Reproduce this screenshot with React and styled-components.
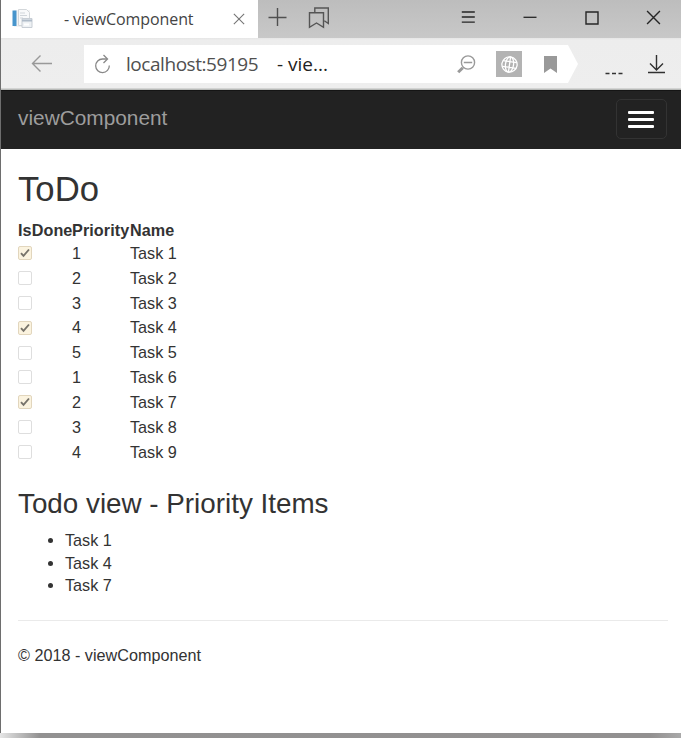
import React from "react";
import styled, { createGlobalStyle } from "styled-components";

const GlobalStyle = createGlobalStyle`
  *, *::before, *::after { box-sizing: border-box; }
  body { margin: 0; background: #fff; }
  svg { display: block; flex: none; }
`;

const Desktop = styled.div`
  width: 681px;
  height: 738px;
  overflow: hidden;
  display: flex;
  flex-direction: column;
`;

const Window = styled.div`
  height: 733px;
  border-left: 1px solid #6e6e6e;
  background: #fff;
  display: flex;
  flex-direction: column;
`;

const WindowShadow = styled.div`
  height: 5px;
  background: linear-gradient(90deg, #e6e6e6 0, #c8c8c8 14px, #929191 40px, #929090 650px, #a9a9a9 681px);
`;

const TabStrip = styled.div`
  height: 38px;
  display: flex;
  background: linear-gradient(#bdbdbd, #c8c8c8);
`;

const Tab = styled.div`
  width: 257px;
  height: 37px;
  padding: 0 13px 0 10px;
  display: flex;
  align-items: center;
  background: #fff;
  box-shadow: 0 1px #fff;
`;

const TabTitle = styled.span`
  flex: 1;
  padding: 1px 0 0 31px;
  font: 16px/22px "Open Sans", sans-serif;
  letter-spacing: -0.1px;
  color: #444;
  white-space: pre;
`;

const StripActions = styled.div`
  flex: 1;
  padding: 7px 20px 0 9px;
  display: flex;
  align-items: flex-start;
  gap: 20px;
`;

const WindowButtons = styled.div`
  margin: 3px 0 0 auto;
  display: flex;
  gap: 47px;
`;

const Toolbar = styled.div`
  height: 52px;
  padding-left: 30px;
  display: flex;
  background: linear-gradient(#e6e6e6 0, #ededed 2px, #eeeeee 50px, #b8bab8 51px, #b8bab8 52px);
`;

const BackButton = styled.div`
  width: 53px;
  padding-top: 16px;
`;

const AddressBar = styled.div`
  width: 494px;
  height: 38px;
  margin-top: 7px;
  padding: 0 20px 0 10px;
  display: flex;
  align-items: center;
  background: #fff;
  clip-path: polygon(0 0, 484px 0, 494px 50%, 484px 100%, 0 100%);
`;

const Address = styled.span`
  margin-left: 15px;
  width: 151px;
  font: 19px/28px "Open Sans", sans-serif;
  letter-spacing: -0.45px;
  color: #505050;
  white-space: pre;
`;

const PageTitle = styled(Address)`
  margin-left: 0;
  width: 60px;
  letter-spacing: 0;
  color: #222;
`;

const AddressIcons = styled.div`
  margin-left: auto;
  display: flex;
  align-items: center;
`;

const GlobeBadge = styled.div`
  width: 26px;
  height: 26px;
  margin: 0 21px 0 20px;
  display: grid;
  place-items: center;
  background: #b3b3b3;
`;

const ToolbarEnd = styled.div`
  padding: 15px 0 0 27px;
  display: flex;
  gap: 24px;
`;

const Navbar = styled.nav`
  height: 59px;
  padding: 0 14px 2px 17px;
  display: flex;
  align-items: center;
  justify-content: space-between;
  background: #222;
  border-top: 1px solid #151515;
`;

const Brand = styled.span`
  padding-bottom: 3px;
  font: 20.83px/24px "Liberation Sans", Arial, sans-serif;
  color: #9d9d9d;
`;

const MenuToggle = styled.div`
  width: 51px;
  height: 40px;
  padding-right: 1px;
  border: 1px solid #333;
  border-radius: 5px;
  display: flex;
  flex-direction: column;
  align-items: center;
  justify-content: center;
  gap: 4px;
`;

const ToggleBar = styled.span`
  width: 26px;
  height: 3px;
  border-radius: 1px;
  background: #fff;
`;

const Page = styled.main`
  flex: 1;
  padding: 0 13px 0 17px;
  font: 16.2px/22.5px "Liberation Sans", Arial, sans-serif;
  color: #333;
`;

const Heading = styled.h2`
  margin: 21px 0 0;
  font-size: 34.7px;
  line-height: 38px;
  font-weight: 400;
`;

const Subheading = styled.h3`
  margin: 24px 0 0;
  font-size: 27.8px;
  line-height: 32px;
  font-weight: 400;
`;

const TaskTable = styled.div`
  padding-top: 11px;
`;

const TaskRow = styled.div`
  height: ${(p) => (p.$head ? "21.8px" : "24.83px")};
  letter-spacing: ${(p) => (p.$head ? "0.08px" : "0")};
  display: grid;
  grid-template-columns: 54px 58px 1fr;
  align-items: center;
  font-weight: ${(p) => (p.$head ? 700 : 400)};
  white-space: nowrap;
`;

const CheckBox = styled.span`
  width: 14px;
  height: 14px;
  border: 1px solid ${(p) => (p.$checked ? "#e2d6bd" : "#dedede")};
  border-radius: 2px;
  background: ${(p) => (p.$checked ? "#fbf3df" : "#fff")};
`;

const PriorityList = styled.ul`
  margin: 9px 0 0;
  padding-left: 47px;
`;

const Divider = styled.hr`
  margin: 23px 0 0;
  border: 0;
  border-top: 1px solid #eaeaea;
`;

const Footer = styled.footer`
  padding-top: 23px;
`;

const tasks = [
  [true, 1], [false, 2], [false, 3], [true, 4], [false, 5],
  [false, 1], [true, 2], [false, 3], [false, 4],
];

const DocumentIcon = () => (
  <svg width="22" height="22" viewBox="0 0 22 22" fill="none">
    <path d="M3 2h16v17H3z" fill="#f2f3f4" />
    <path d="M1.5 2.5h4V18h-4z" fill="#4795cc" />
    <path d="M7.5 1.5h8l3 3v13h-11z" fill="#f8f9fa" stroke="#d3d7da" />
    <path d="M9 5h5M9 7.5h7M9 10h3" stroke="#d0d5da" />
    <path d="M11 10.5h10v9H11z" fill="#eef1f4" stroke="#c8ced5" />
    <path d="M11 12.5h10" stroke="#afbbc8" strokeWidth="2" />
    <path d="M13 16.5h5" stroke="#fff" strokeWidth="2" />
  </svg>
);

const Cross = ({ size, color }) => (
  <svg width={size} height={size} viewBox="0 0 14 14" fill="none" stroke={color} strokeWidth="1.3">
    <path d="M1 1l12 12M13 1L1 13" />
  </svg>
);

export default function App() {
  return (
    <Desktop>
      <GlobalStyle />
      <Window>
        <TabStrip>
          <Tab>
            <DocumentIcon />
            <TabTitle>- viewComponent</TabTitle>
            <Cross size={12} color="#777" />
          </Tab>
          <StripActions>
            <svg width="20" height="20" viewBox="0 0 20 20" stroke="#505050" strokeWidth="1.4">
              <path d="M10.5 1v18M1.5 10.5h18" />
            </svg>
            <svg width="22" height="22" viewBox="0 0 22 22" fill="none" stroke="#555" strokeWidth="1.4">
              <path d="M2.5 5.8h14v14.5l-7-4.3-7 4.3z" />
              <path d="M7.8 5V1h13.5v15.5l-4-2.8" />
            </svg>
            <WindowButtons>
              <svg width="14" height="14" viewBox="0 0 14 14" stroke="#262626" strokeWidth="1.3">
                <path d="M.8 2h13M.8 7h13M.8 12.2h13" />
              </svg>
              <svg width="15" height="14" viewBox="0 0 15 14" stroke="#262626" strokeWidth="1.3">
                <path d="M1.5 7.3h13" />
              </svg>
              <svg width="15" height="15" viewBox="0 0 15 15" fill="none" stroke="#262626" strokeWidth="1.4">
                <path d="M2 2h12v12H2z" />
              </svg>
              <Cross size={15} color="#262626" />
            </WindowButtons>
          </StripActions>
        </TabStrip>

        <Toolbar>
          <BackButton>
            <svg width="22" height="19" viewBox="0 0 22 19" fill="none" stroke="#999" strokeWidth="1.4">
              <path d="M21 9.5H2M9.5 1.5l-8 8 8 8" />
            </svg>
          </BackButton>
          <AddressBar>
            <svg width="17" height="20" viewBox="0 0 17 20" fill="none" stroke="#888" strokeWidth="1.3">
              <path d="M13 5H8.5A6.8 6.8 0 1 0 15.3 11.5" />
              <path d="M9.5 1l4 4-4 4" />
            </svg>
            <Address>localhost:59195</Address>
            <PageTitle>- vie...</PageTitle>
            <AddressIcons>
              <svg width="19" height="19" viewBox="0 0 19 19" fill="none" stroke="#999" strokeWidth="1.4">
                <circle cx="11" cy="7.5" r="6.6" />
                <path d="M6.8 7.5h8.4" />
                <path d="M5.8 12.7l-4.6 4.6" strokeWidth="3" />
              </svg>
              <GlobeBadge>
                <svg width="17" height="17" viewBox="0 0 16 16" fill="none" stroke="#fff" strokeWidth="1.2">
                  <g transform="rotate(8 8 8)">
                    <circle cx="8" cy="8" r="7.2" />
                    <ellipse cx="8" cy="8" rx="3.8" ry="7.2" />
                    <path d="M8 1v14M1.5 5.3h13M1.5 10.7h13" />
                  </g>
                </svg>
              </GlobeBadge>
              <svg width="15" height="17" viewBox="0 0 15 17">
                <path d="M1 0h13v17l-6.5-4.5L1 17z" fill="#999" />
              </svg>
            </AddressIcons>
          </AddressBar>
          <ToolbarEnd>
            <svg width="18" height="24" viewBox="0 0 18 24" stroke="#333" strokeWidth="1.7">
              <path d="M.5 20.5h4M7 20.5h4M13.5 20.5h4" />
            </svg>
            <svg width="18" height="22" viewBox="0 0 18 22" fill="none" stroke="#303030" strokeWidth="1.4">
              <path d="M9.5 2v15M3 10.5L9.5 17l6.5-6.5M1 19.5h17" />
            </svg>
          </ToolbarEnd>
        </Toolbar>

        <Navbar>
          <Brand>viewComponent</Brand>
          <MenuToggle>
            <ToggleBar />
            <ToggleBar />
            <ToggleBar />
          </MenuToggle>
        </Navbar>

        <Page>
          <Heading>ToDo</Heading>
          <TaskTable>
            <TaskRow $head>
              <span>IsDone</span>
              <span>Priority</span>
              <span>Name</span>
            </TaskRow>
            {tasks.map(([done, priority], i) => (
              <TaskRow key={i}>
                <CheckBox $checked={done}>
                  {done && (
                    <svg width="12" height="12" viewBox="0 0 12 12" fill="none" stroke="#77736a" strokeWidth="1.9">
                      <path d="M2 6.2l2.5 2.6L10 2.5" />
                    </svg>
                  )}
                </CheckBox>
                <span>{priority}</span>
                <span>Task {i + 1}</span>
              </TaskRow>
            ))}
          </TaskTable>
          <Subheading>Todo view - Priority Items</Subheading>
          <PriorityList>
            {[1, 4, 7].map((n) => (
              <li key={n}>Task {n}</li>
            ))}
          </PriorityList>
          <Divider />
          <Footer>© 2018 - viewComponent</Footer>
        </Page>
      </Window>
      <WindowShadow />
    </Desktop>
  );
}
